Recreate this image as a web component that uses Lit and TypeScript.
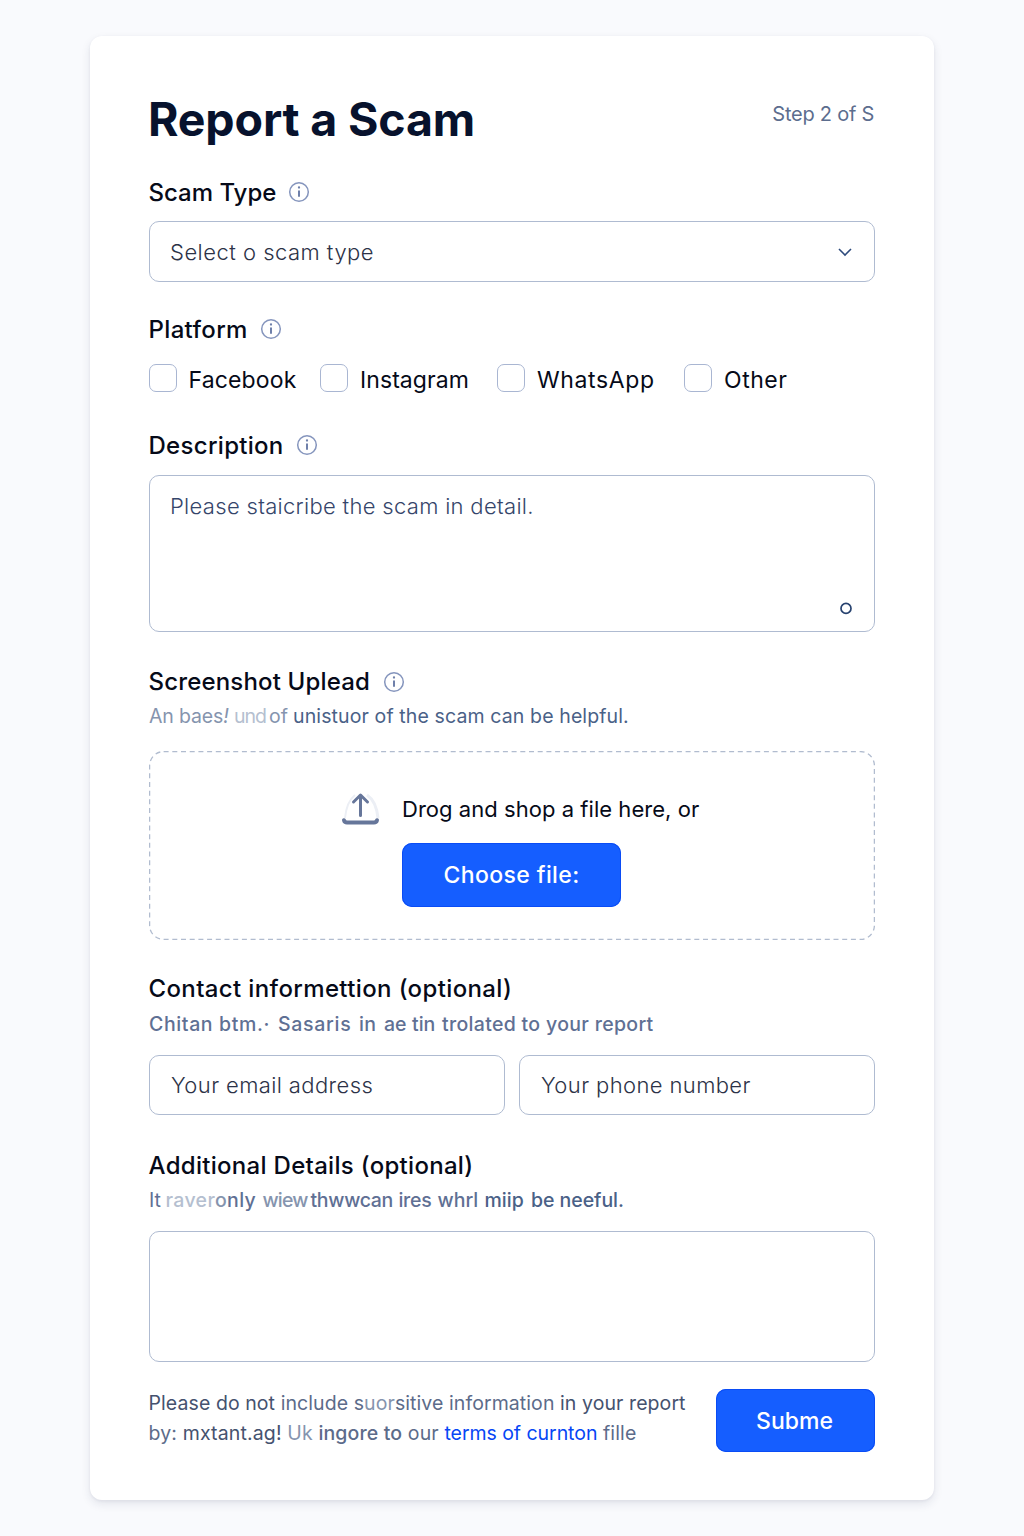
import { LitElement, html, css } from "lit";
import { customElement } from "lit/decorators.js";

const info = html`<svg class="info" viewBox="0 0 22 22" aria-hidden="true">
  <circle cx="11" cy="11" r="9.3"></circle>
  <path d="M11 9.4v6.4"></path>
  <path class="dot" d="M11 6.5v.1"></path>
</svg>`;

@customElement("app-root")
export class AppRoot extends LitElement {
  static styles = css`
    :host {
      display: block;
      box-sizing: border-box;
      min-height: 1536px;
      padding: 36px 90px;
      background: #f9fafd;
      font-family: Inter, "Liberation Sans", sans-serif;
      color: #060a18;
    }
    * { box-sizing: border-box; }
    .card {
      width: 844px;
      height: 1464px;
      padding: 55px 59px 48px;
      background: #fff;
      border-radius: 12px;
      box-shadow: 0 4px 10px rgba(30, 41, 80, 0.1), 0 1px 3px rgba(30, 41, 80, 0.06);
      white-space: nowrap;
    }
    .header { display: flex; justify-content: space-between; height: 56px; }
    h1 { margin: 0 0 0 -1px; font-size: 46.5px; line-height: 56px; font-weight: 650; letter-spacing: -0.15px; color: #07122d; }
    .step { padding: 11px 1px 0 0; font-size: 20px; line-height: 24px; letter-spacing: -0.25px; color: #5c6d8e; }
    .label { display: flex; align-items: center; gap: 12px; height: 30px; font-size: 24px; line-height: 30px; font-weight: 500; margin-left: -0.5px; }
    .label span { padding-top: 2px; }
    .label .t-shot { padding: 0 1px 0 0; }
    .info { width: 22px; height: 22px; fill: none; stroke: #8595bd; stroke-width: 1.5; }
    .info path { stroke: #6f80aa; stroke-width: 2; }
    .info .dot { stroke-width: 2.3; stroke-linecap: round; }
    .box { display: flex; border: 1.3px solid #afbbd1; border-radius: 10px; padding: 0 20px; font-size: 22px; line-height: 30px; font-weight: 300; color: #2c3247; }
    .select { height: 61px; align-items: center; justify-content: space-between; padding-right: 21px; }
    .chevron { width: 16px; height: 10px; fill: none; stroke: #2d4a7c; stroke-width: 1.6; }
    .checks { display: flex; height: 28px; align-items: center; font-size: 23px; line-height: 28px; margin-left: -0.5px; }
    .check { display: flex; align-items: center; gap: 12px; }
    .check span { padding-top: 3px; }
    .tick { width: 28px; height: 28px; border: 1.3px solid #a9b6d2; border-radius: 7px; }
    .fb { width: 171.5px; letter-spacing: 0.15px; }
    .ig { width: 177px; letter-spacing: 0.08px; }
    .wa { width: 187px; letter-spacing: 0.63px; }
    .ot { letter-spacing: 0.55px; }
    .desc { height: 157px; justify-content: space-between; padding: 15px 21px 0 20px; color: #35456a; }
    .grip { width: 14px; height: 14px; margin-top: 110px; fill: none; stroke: #27426f; stroke-width: 1.7; }
    .hint { display: flex; height: 24px; font-size: 19.5px; line-height: 24px; color: #4a6187; }
    .hint span { white-space: pre; }
    .m { font-weight: 500; }
    .drop { position: relative; height: 189px; padding: 42px 0 0 192px; }
    .dashes { position: absolute; top: 0; left: 0; width: 726px; height: 189px; fill: none; stroke: #b1bccf; stroke-width: 1.3; stroke-dasharray: 5 3.7; }
    .dragline { display: flex; align-items: center; gap: 21px; height: 32px; font-size: 22px; line-height: 32px; letter-spacing: 0.04px; }
    .up { width: 40px; height: 36px; }
    .btn { display: block; border: 0; padding: 0; border-radius: 10px; background: #155eff; box-shadow: inset 0 0 0 1px #0a4cf5; color: #fff; font: 500 23px/30px Inter, sans-serif; }
    .choose { width: 219px; height: 64px; margin: 18px 0 0 61px; letter-spacing: 0.4px; }
    .pair { display: grid; grid-template-columns: 1fr 1fr; gap: 14px; }
    .pair .box { height: 60px; align-items: center; padding-left: 21px; letter-spacing: 0.39px; }
    .extra { height: 131px; }
    .footer { display: flex; justify-content: space-between; font-size: 19.5px; line-height: 29.5px; color: #5c6b8a; }
    .note { margin-left: -0.5px; }
    .submit { width: 159px; height: 63px; padding-right: 2px; }
    .link { color: #0646f5; letter-spacing: -0.05px; }
    .pale { color: #8594ae; } .faint { color: #b5bfd0; } .dark { color: #45526f; } .slate { color: #5f7094; }
    .thin { font-weight: 400; }
    .t-select { letter-spacing: 0.48px; } .t-platform { letter-spacing: 0.35px; }
    .t-descr { letter-spacing: 0.3px; } .t-shot { letter-spacing: 0.17px; }
    .t-contact { letter-spacing: 0.37px; } .t-add { letter-spacing: 0.3px; }
    .t-please { letter-spacing: 0.31px; }
    .t-foot1 { letter-spacing: 0.08px; } .t-foot2 { letter-spacing: 0.14px; }
    .h-a { width: 85px; letter-spacing: -0.15px; } .h-b { width: 35px; letter-spacing: -1px; }
    .h-c { width: 24px; } .h-d { letter-spacing: 0.12px; }
    .c-a { width: 129px; letter-spacing: 0.62px; } .c-b { width: 81px; letter-spacing: 0.7px; }
    .c-c { width: 25px; letter-spacing: 0.4px; } .c-d { width: 28px; } .c-e { width: 30px; } .c-f { letter-spacing: 0.32px; }
    .a-a { width: 16.5px; } .a-b { width: 97px; letter-spacing: 0.35px; } .a-c { width: 48px; letter-spacing: -0.8px; }
    .a-d { width: 88px; letter-spacing: -0.3px; } .a-e { width: 39px; letter-spacing: -0.3px; } .a-f { width: 47px; }
    .a-g { width: 46.5px; } .a-h { letter-spacing: -0.05px; }
    .g7 { margin-top: 7px; } .g8 { margin-top: 8px; } .g9 { margin-top: 9px; }
    .g14 { margin-top: 14px; } .g15 { margin-top: 15px; } .g19 { margin-top: 19px; }
    .g20 { margin-top: 20px; } .g23 { margin-top: 23px; } .g27 { margin-top: 27px; }
    .g30 { margin-top: 30px; } .g32 { margin-top: 32px; } .g33 { margin-top: 33px; }
    .g35 { margin-top: 35px; } .g38 { margin-top: 38px; }
  `;

  render() {
    return html`<main class="card">
      <div class="header"><h1>Report a Scam</h1><div class="step">Step 2 of S</div></div>

      <div class="label g30"><span>Scam Type</span>${info}</div>
      <div class="box select g14">
        <span class="t-select">Select o scam type</span>
        <svg class="chevron" viewBox="0 0 16 10"><path d="M2 2l6 6 6-6"></path></svg>
      </div>

      <div class="label g32"><span class="t-platform">Platform</span>${info}</div>
      <div class="checks g20">
        <div class="check fb"><i class="tick"></i><span>Facebook</span></div>
        <div class="check ig"><i class="tick"></i><span>Instagram</span></div>
        <div class="check wa"><i class="tick"></i><span>WhatsApp</span></div>
        <div class="check ot"><i class="tick"></i><span>Other</span></div>
      </div>

      <div class="label g38"><span class="t-descr">Description</span>${info}</div>
      <div class="box desc g15">
        <span class="t-please">Please staicribe the scam in detail.</span>
        <svg class="grip" viewBox="0 0 14 14"><circle cx="7" cy="7.4" r="5"></circle></svg>
      </div>

      <div class="label g35"><span class="t-shot">Screenshot Uplead</span>${info}</div>
      <div class="hint g7"><span class="pale h-a">An baes<i>!</i> </span><span class="faint h-b">und </span><span class="pale h-c">of </span><span class="h-d">unistuor of the scam can be helpful.</span></div>
      <div class="drop g23">
        <svg class="dashes" viewBox="0 0 726 189"><rect x=".6" y=".6" width="724.8" height="187.8" rx="14"></rect></svg>
        <div class="dragline">
          <svg class="up" viewBox="0 0 40 36">
            <path d="M4 27C5 17 9 8 14 4" fill="none" stroke="#eceff5" stroke-width="2"></path>
            <path d="M26 4c6 4 10 13 11 23" fill="none" stroke="#eceff5" stroke-width="3"></path>
            <path d="M19.5 24.5V5M12.5 11l7-7 7 7" fill="none" stroke="#66769a" stroke-width="3" stroke-linecap="round" stroke-linejoin="round"></path>
            <path d="M3 29.2q.6 2.3 3 2.3h27q2.400 0 3-2.300" fill="none" stroke="#66769a" stroke-width="4" stroke-linecap="round"></path>
          </svg>
          <span>Drog and shop a file here, or</span>
        </div>
        <button class="btn choose">Choose file:</button>
      </div>

      <div class="label g33"><span class="t-contact">Contact informettion (optional)</span></div>
      <div class="hint m slate g9"><span class="c-a">Chitan btm.· </span><span class="c-b">Sasaris </span><span class="c-c">in </span><span class="c-d">ae </span><span class="c-e">tin </span><span class="c-f">trolated to your report</span></div>
      <div class="pair g19">
        <div class="box"><span>Your email address</span></div>
        <div class="box"><span>Your phone number</span></div>
      </div>

      <div class="label g35"><span class="t-add">Additional Details (optional)</span></div>
      <div class="hint m g8"><span class="thin slate a-a">It </span><span class="a-b"><span class="faint">raver</span><span class="pale">o</span><span class="slate">nly </span></span><span class="pale a-c">wiew </span><span class="slate a-d">thwwcan </span><span class="slate a-e">ires </span><span class="slate a-f">whrl </span><span class="a-g">miip </span><span class="a-h">be neeful.</span></div>
      <div class="box extra g19"></div>

      <div class="footer g27">
        <div class="note">
          <div class="t-foot1"><span class="dark">Please do not</span> include s<span class="pale">uor</span>sitive information <span class="dark">in your report</span></div>
          <div class="t-foot2">by: <span class="dark">mxtant.ag!</span> <span class="pale">Uk</span> <span class="m">ingore to</span> our <span class="link">terms of curnton</span> fille</div>
        </div>
        <button class="btn submit">Subme</button>
      </div>
    </main>`;
  }
}
